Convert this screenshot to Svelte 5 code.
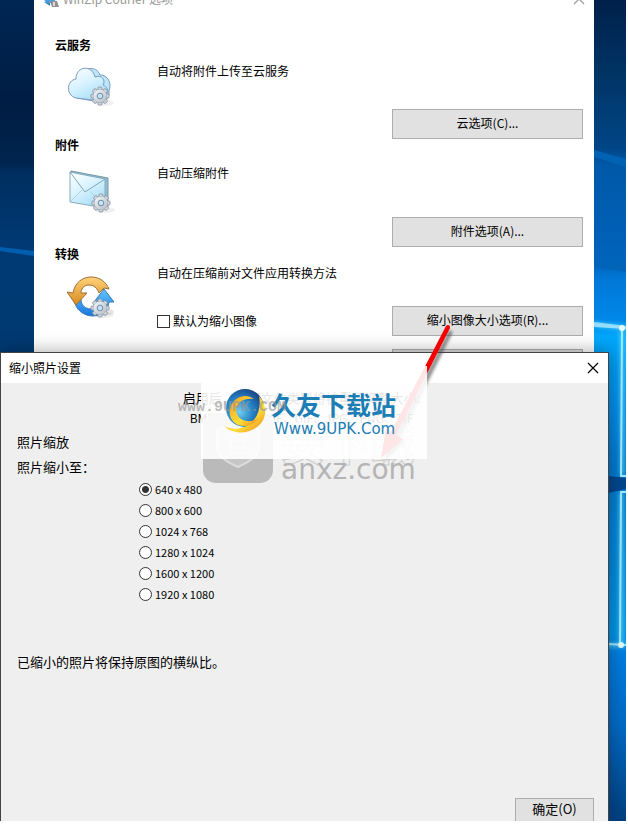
<script>
  let shrinkByDefault = $state(false);
  let size = $state('640 x 480');
  const sizes = ['640 x 480', '800 x 600', '1024 x 768', '1280 x 1024', '1600 x 1200', '1920 x 1080'];
  const teeth = [0, 45, 90, 135, 180, 225, 270, 315];
</script>

{#snippet gear(x, y)}
  <g transform="translate({x} {y})">
    <ellipse cx="4" cy="7" rx="10" ry="3" fill="#000" opacity=".06" />
    {#each teeth as a}
      <rect x="-2" y="-9" width="4" height="5" rx="1" fill="#d5dbe2" stroke="#8a93a0" stroke-width=".9" transform="rotate({a})" />
    {/each}
    <circle r="6.8" fill="url(#steel)" stroke="#98a1ad" stroke-width=".6" />
    <circle r="6.2" fill="url(#steel)" />
    <circle r="2.8" fill="#bfe7fa" stroke="#7789a0" stroke-width="1" />
  </g>
{/snippet}

<main class="desktop">
  <svg class="wallpaper" viewBox="0 0 626 821" preserveAspectRatio="none" aria-hidden="true">
    <defs>
      <linearGradient id="left" x2="0" y2="1">
        <stop offset="0" stop-color="#002654" /><stop offset=".13" stop-color="#001d43" />
        <stop offset=".2" stop-color="#002550" /><stop offset=".21" stop-color="#002e60" />
        <stop offset=".3" stop-color="#003a74" /><stop offset=".43" stop-color="#003a72" />
      </linearGradient>
      <linearGradient id="right" x2="0" y2="1">
        <stop offset="0" stop-color="#00204a" /><stop offset=".1" stop-color="#003668" />
        <stop offset=".18" stop-color="#004586" /><stop offset=".2" stop-color="#0058a8" />
        <stop offset=".32" stop-color="#0064bb" /><stop offset=".34" stop-color="#0078d8" />
        <stop offset=".39" stop-color="#0088e8" /><stop offset=".41" stop-color="#00a8fc" />
        <stop offset=".5" stop-color="#008ce8" /><stop offset=".57" stop-color="#0079d0" />
        <stop offset=".62" stop-color="#0080d4" /><stop offset=".77" stop-color="#0094e6" />
        <stop offset=".8" stop-color="#007ce0" /><stop offset=".88" stop-color="#006cc8" />
        <stop offset="1" stop-color="#004080" />
      </linearGradient>
      <filter id="glow" filterUnits="userSpaceOnUse" x="580" y="300" width="60" height="380"><feGaussianBlur stdDeviation="2" /></filter>
      <linearGradient id="steel" x2="1" y2="1">
        <stop offset="0" stop-color="#f4f6f9" /><stop offset="1" stop-color="#b4bdc9" />
      </linearGradient>
    </defs>
    <rect width="300" height="821" fill="url(#left)" />
    <rect x="300" width="326" height="821" fill="url(#right)" />
    <path d="M0 247L34 251V256L0 251Z" fill="#005eae" />
    <path d="M594 150L626 159V167L594 157Z" fill="#0062b2" />
    <path d="M594 267L626 272V262H594Z" fill="#0064b8" />
    <g fill="none" stroke="#6fe0ff" stroke-width="4" filter="url(#glow)" opacity=".7">
      <path d="M594 324L626 328M622 328V475M621 492V645M605 645H626" />
    </g>
    <path d="M594 322L626 326V329L594 327Z" fill="#aeeaff" opacity=".8" />
    <path d="M600 475L626 478V489L600 495Z" fill="#00478e" />
    <path d="M622 328L621 476H626M626 492H621L620 645M608 644L626 645" fill="none" stroke="#a0ecff" stroke-width="2" />
    <circle cx="622" cy="328" r="3" fill="#e6fcff" /><circle cx="621" cy="645" r="3" fill="#e6fcff" />
  </svg>

  <section class="options" aria-label="WinZip Courier 选项">
    <header class="options-title">
      <svg width="20" height="20" viewBox="0 0 20 20" aria-hidden="true">
        <path d="M0 5h12l3 9H5z" fill="#4a9fe2" /><path d="M9 12h7l2 6h-7z" fill="#909090" />
        <path d="M3 13l6 1v3z" fill="#3785c9" /><path d="M12 13h2v4h-2z" fill="#ddd" />
      </svg>
      <span>WinZip Courier 选项</span>
      <button class="close muted" aria-label="关闭选项"><svg width="12" height="12" viewBox="0 0 12 12"><path d="M1 1L11 11M11 1L1 11" /></svg></button>
    </header>

    <div class="group cloud">
      <h2>云服务</h2>
      <div class="body">
        <svg class="icon" width="52" height="52" viewBox="0 0 52 52" aria-hidden="true">
          <defs><linearGradient id="sky" x2=".6" y2="1"><stop offset="0" stop-color="#fff" /><stop offset=".5" stop-color="#d9f3ff" /><stop offset="1" stop-color="#a9def7" /></linearGradient></defs>
          <path d="M12 13C14 2 29 -2 33 9C41 9 45 17 42 25C43 33 37 36 33 36L10 32Z" fill="#bfe6f8" stroke="#7b9cc4" stroke-width="1" />
          <path d="M9 32C-2 29 0 14 9 13C9 0 25 -2 28 11C35 8 39 15 36 19C44 22 42 35 33 35Z" fill="url(#sky)" stroke="#7899c3" stroke-width="1" />
          {@render gear(33, 30)}
        </svg>
        <div class="settings"><p>自动将附件上传至云服务</p><button class="push">云选项(C)...</button></div>
      </div>
    </div>

    <div class="group mail">
      <h2>附件</h2>
      <div class="body">
        <svg class="icon" width="52" height="52" viewBox="0 0 52 52" aria-hidden="true">
          <path d="M4 5L41 12V41L38 43L3 8Z" fill="#8fbdd2" stroke="#7598a8" stroke-width="1" />
          <path d="M3 6L38 13V42L3 36Z" fill="url(#sky)" stroke="#85adbd" stroke-width="1" />
          <path d="M3 36L15 24M38 42L23 25" fill="none" stroke="#adcbd7" stroke-width=".8" />
          <path d="M3 6L18 26L38 13" fill="none" stroke="#7ea7b9" stroke-width="1" />
          {@render gear(34, 37)}
        </svg>
        <div class="settings"><p>自动压缩附件</p><button class="push">附件选项(A)...</button></div>
      </div>
    </div>

    <div class="group convert">
      <h2>转换</h2>
      <div class="body">
        <svg class="icon" width="52" height="52" viewBox="0 0 52 52" aria-hidden="true">
          <defs>
            <linearGradient id="gold" x2="0" y2="1"><stop offset="0" stop-color="#ffd37a" /><stop offset="1" stop-color="#d98920" /></linearGradient>
            <linearGradient id="blue" x2="0" y2="1"><stop offset="0" stop-color="#62c6ff" /><stop offset="1" stop-color="#1976df" /></linearGradient>
          </defs>
          <ellipse cx="34" cy="37" rx="13" ry="4" fill="#000" opacity=".1" />
          <path d="M7 24C8 35 17 41 26 41C35 41 41 35 42 27H47L37 14L27 27H33C33 31 29 34 24 34C18 34 14 30 14 24Z" fill="url(#blue)" stroke="#3d79b4" stroke-width="1" />
          <path d="M6 18C8 7 16 2 24 2C33 2 39 7 42 14L37 13L32 18C30 13 27 10 22 10C17 10 14 14 14 18H20L9 30L0 17Z" fill="url(#gold)" stroke="#9b7135" stroke-width="1" />
          {@render gear(33, 33)}
        </svg>
        <div class="settings">
          <p>自动在压缩前对文件应用转换方法</p>
          <div class="line">
            <label><input type="checkbox" bind:checked={shrinkByDefault} />默认为缩小图像</label>
            <button class="push">缩小图像大小选项(R)...</button>
          </div>
          <button class="push next" aria-label="更多转换选项"></button>
        </div>
      </div>
    </div>
  </section>

  <section class="dialog" role="dialog" aria-labelledby="dialog-title">
    <header><h1 id="dialog-title">缩小照片设置</h1><button class="close" aria-label="关闭"><svg width="12" height="12" viewBox="0 0 12 12"><path d="M1 1L11 11M11 1L1 11" /></svg></button></header>
    <div class="content">
      <div class="intro"><p>启用后，以下文件类型将被重新调整大小:</p><p class="types">BMP、DIB、EXIF、GIF、JPG、PNG、TIF</p></div>
      <p class="lead">照片缩放</p>
      <fieldset>
        <legend>照片缩小至：</legend>
        {#each sizes as s}
          <label><input type="radio" name="size" value={s} bind:group={size} />{s}</label>
        {/each}
      </fieldset>
      <p class="note">已缩小的照片将保持原图的横纵比。</p>
      <footer><button class="push ok">确定(O)</button></footer>
    </div>
  </section>

  <div class="overlay">
    <svg class="shield" width="70" height="70" viewBox="0 0 70 70" aria-hidden="true">
      <rect width="70" height="70" rx="13" fill="#bababa" />
      <path d="M35 9L56 17V34Q56 45 35 54Q14 45 14 34V17Z" fill="#c6c6c6" stroke="#dcdcdc" stroke-width="2" />
      <path d="M26 22H44M28 28H42V35H28ZM25 41H45" fill="none" stroke="#e0e0e0" stroke-width="2" />
    </svg>
    <span class="outlined">安下载</span>
    <span class="domain">anxz.com</span>
    <svg class="arrow" width="90" height="150" viewBox="0 0 90 150" aria-hidden="true">
      <defs><filter id="soft"><feGaussianBlur stdDeviation="1.5" /></filter></defs>
      <path d="M77 11L23 118L28 121L9 140L12 112L18 115L73 9Z" fill="#444" opacity=".6" filter="url(#soft)" />
      <path d="M70 5L15 111L10 108L5 137L27 118L20 114L74 7Z" fill="#f40000" />
      <circle cx="72" cy="6" r="2" fill="#f40000" />
    </svg>
    <div class="banner">
      <svg width="48" height="48" viewBox="0 0 48 48" aria-hidden="true">
        <defs>
          <radialGradient id="globe" cx=".35" cy=".6" r=".7"><stop offset="0" stop-color="#72cef0" /><stop offset=".5" stop-color="#2385c6" /><stop offset="1" stop-color="#193c80" /></radialGradient>
          <linearGradient id="sun" x2="1" y2="1"><stop offset="0" stop-color="#f39a21" /><stop offset=".6" stop-color="#ffe038" /><stop offset="1" stop-color="#e9851b" /></linearGradient>
        </defs>
        <circle cx="22" cy="21" r="19" fill="url(#globe)" />
        <path d="M36 9C45 19 44 33 34 40C24 48 9 47 1 39C10 44 22 42 29 35C36 28 38 18 36 9Z" fill="url(#sun)" />
        <path d="M31 12C22 5 9 11 7 22C5 32 12 40 23 39C29 38 33 35 35 31C29 36 19 35 15 29C10 21 16 10 31 12Z" fill="url(#sun)" />
      </svg>
      <div class="brand"><strong>久友下载站</strong><span>Www.9UPK.Com</span></div>
    </div>
    <span class="mono">www.9UPK.COM</span>
  </div>
</main>

<style>
  :global(body) { background: #fff; }
  h1, h2, p, fieldset, legend { margin: 0; padding: 0; border: 0; font-weight: 400; }
  .desktop { position: relative; margin-right: 2px; height: 821px; overflow: hidden; font: 12px/16px "Noto Sans CJK SC", sans-serif; color: #000; }
  .wallpaper { position: absolute; inset: 0; width: 100%; height: 100%; }
  .push { box-sizing: border-box; width: 191px; height: 30px; padding: 0 0 2px; border: 1px solid #adadad; background: #e1e1e1; font: inherit; color: #000; }
  .close { display: flex; padding: 0; border: 0; background: none; }
  .close path { stroke: #000; stroke-width: 1.2; }
  .close.muted path { stroke: #999; }

  .options { position: absolute; top: -17px; left: 34px; right: 32px; bottom: 0; background: #fff; }
  .options-title { display: flex; align-items: center; gap: 2px; height: 32px; padding: 0 9px 0 7px; color: #999; }
  .options-title .close { margin-left: auto; }
  .group { padding: 0 11px 0 21px; }
  .group.cloud { margin-top: 22px; height: 100px; }
  .group.mail { height: 109px; }
  h2 { font-size: 12px; line-height: 16px; font-weight: 700; }
  .body { display: flex; }
  .icon { flex: none; margin: 13px 38px 0 12px; }
  .settings { flex: 1; display: flex; flex-direction: column; }
  .settings .push { align-self: flex-end; }
  .cloud .settings { padding-top: 10px; gap: 30px; }
  .mail .settings { padding-top: 12px; gap: 36px; }
  .convert .settings { padding-top: 3px; }
  .line { display: flex; justify-content: space-between; align-items: center; margin-top: 25px; }
  .line label { display: flex; align-items: center; gap: 3px; }
  input { appearance: none; box-sizing: border-box; width: 13px; height: 13px; margin: 0; border: 1px solid #333; background: #fff; }
  input[type='checkbox']:checked { box-shadow: inset 0 0 0 2px #fff; background: #333; }
  .settings .next { margin-top: 13px; }

  .dialog { position: absolute; top: 352px; left: 0; right: 17px; bottom: 0; display: flex; flex-direction: column; border: 1px solid #444; border-bottom: 0; background: #efefef; box-shadow: 0 0 18px rgba(0, 0, 0, .35); }
  .dialog header { display: flex; align-items: center; justify-content: space-between; height: 30px; padding: 0 9px 0 8px; background: #fff; }
  h1 { font-size: 12px; line-height: 16px; }
  .content { flex: 1; display: flex; flex-direction: column; padding: 5px 14px 0 16px; font-size: 13px; line-height: 20px; }
  .intro { padding-right: 8px; text-align: center; }
  .types { font-size: 12px; }
  .lead { margin-top: 4px; }
  fieldset { display: flex; flex-direction: column; min-width: 0; margin-top: 5px; padding-left: 122px; gap: 1px; }
  fieldset legend { margin-left: -122px; margin-bottom: 2px; }
  fieldset label { display: flex; align-items: center; gap: 3px; height: 20px; font-size: 11px; }
  input[type='radio'] { border-radius: 50%; }
  input[type='radio']:checked { background: radial-gradient(circle, #333 0 3px, #fff 4px); }
  .note { margin-top: 48px; }
  footer { display: flex; justify-content: flex-end; margin-top: auto; }
  .push.ok { width: 79px; height: 23px; border-bottom: 0; }

  .overlay { position: absolute; inset: 0; pointer-events: none; }
  .overlay > * { position: absolute; }
  .shield { left: 203px; top: 413px; }
  .outlined { left: 280px; top: 419px; font-size: 45px; line-height: 46px; font-weight: 700; color: transparent; -webkit-text-stroke: 1px #ccc; }
  .domain { left: 281px; top: 454px; font: 28px/32px "DejaVu Sans", sans-serif; color: #b4b4b4; }
  .arrow { left: 376px; top: 321px; }
  .banner { left: 201px; top: 366px; box-sizing: border-box; width: 226px; height: 93px; padding: 21px 0 0 22px; display: flex; background: rgba(255, 255, 255, .9); color: #1d7db5; }
  .brand { display: flex; flex-direction: column; padding-top: 2px; }
  .brand strong { font-size: 25px; line-height: 30px; font-weight: 700; }
  .brand span { padding-left: 3px; font: 15px/20px "DejaVu Sans", sans-serif; }
  .mono { left: 178px; top: 400px; font: 700 15px/16px "Liberation Mono", monospace; color: rgba(150, 150, 150, .65); }
</style>
